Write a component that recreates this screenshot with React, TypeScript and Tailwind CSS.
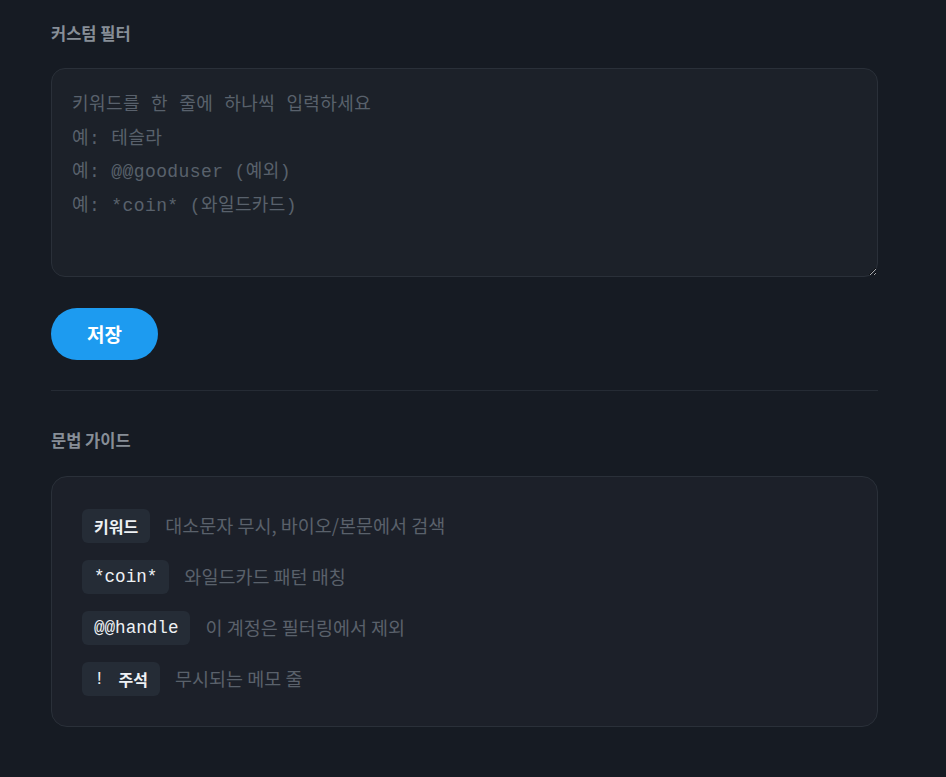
import { useState } from 'react'

const rules = [
  { token: '키워드', mono: false, desc: '대소문자 무시, 바이오/본문에서 검색' },
  { token: '*coin*', mono: true, desc: '와일드카드 패턴 매칭' },
  { token: '@@handle', mono: true, desc: '이 계정은 필터링에서 제외' },
  { token: '!', mono: true, extra: '주석', desc: '무시되는 메모 줄' },
]

const placeholder = `키워드를 한 줄에 하나씩 입력하세요
예: 테슬라
예: @@gooduser (예외)
예: *coin* (와일드카드)`

export default function App() {
  const [value, setValue] = useState('')
  return (
    <div className="min-h-screen bg-[#161b23] font-['Noto_Sans_CJK_KR','Noto_Sans',sans-serif]">
      <div className="w-[827px] ml-[51px] pt-[22px] pb-[50px]">
        <h2 className="text-[16.5px] leading-[22px] font-bold text-[#878e97]">커스텀 필터</h2>

        <textarea
          value={value}
          onChange={e => setValue(e.target.value)}
          placeholder={placeholder}
          className="block mt-6 w-full h-[209px] rounded-[14px] border border-[#2a3039] bg-[#1c2129] px-5 pt-[20px] pb-4 text-[18px] tracking-[0.4px] leading-[33.5px] text-[#c9d1d9] placeholder:text-[#59616c] outline-none font-['Liberation_Mono','Noto_Sans_CJK_KR',monospace]"
        />

        <button className="mt-[31px] w-[107px] h-[52px] rounded-full bg-[#1d9bf0] text-white text-[19px] font-bold">
          저장
        </button>

        <div className="mt-[30px] border-t border-[#252b34]" />

        <h2 className="mt-[38px] text-[16.5px] leading-[22px] font-bold text-[#878e97]">문법 가이드</h2>

        <div className="mt-[25px] rounded-2xl border border-[#2a3039] bg-[#1c2029] pl-[30px] pt-8 pb-[30px] flex flex-col gap-[17px]">
          {rules.map(r => (
            <div key={r.token} className="flex items-center gap-[15px]">
              <span className="h-[34px] px-3 flex items-center rounded-md bg-[#252c36] text-[#eef1f4] font-bold">
                {r.mono ? (
                  <span className="font-['Liberation_Mono',monospace] font-normal text-[17.6px]">{r.token}</span>
                ) : (
                  <span className="text-[16px]">{r.token}</span>
                )}
                {r.extra && <span className="ml-[14px] text-[16px]">{r.extra}</span>}
              </span>
              <span className="text-[18.5px] text-[#5a616b]">{r.desc}</span>
            </div>
          ))}
        </div>
      </div>
    </div>
  )
}
